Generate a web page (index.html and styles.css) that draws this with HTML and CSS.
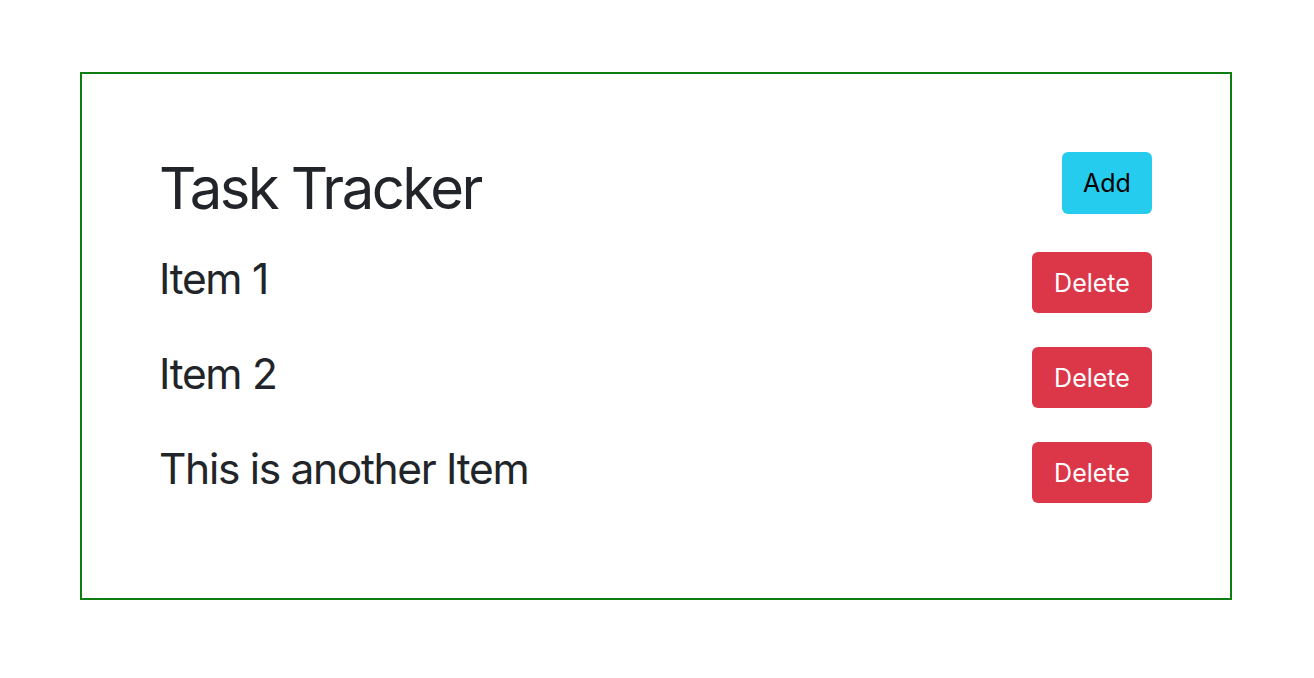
FILE: index.html
```html
<!DOCTYPE html>
<html>
<head>
<meta charset="utf-8">
<link rel="stylesheet" href="styles.css">
</head>
<body>
<div class="card">
  <header class="header">
    <h1 class="title">Task Tracker</h1>
    <button class="btn btn-add">Add</button>
  </header>
  <ul class="list">
    <li class="row"><span class="item">Item 1</span><button class="btn btn-delete">Delete</button></li>
    <li class="row"><span class="item">Item 2</span><button class="btn btn-delete">Delete</button></li>
    <li class="row"><span class="item">This is another Item</span><button class="btn btn-delete">Delete</button></li>
  </ul>
</div>
</body>
</html>
```
FILE: styles.css
```css
html, body {
  margin: 0;
  padding: 0;
  background: #fff;
}
body {
  font-family: Inter, "Noto Sans", sans-serif;
  color: #212529;
}
.card {
  margin: 72px 0 0 80px;
  width: 1152px;
  box-sizing: border-box;
  border: 2px solid #0f7d0f;
  padding: 78px 78px 95px 77px;
}
.header {
  display: flex;
  justify-content: space-between;
  align-items: center;
  height: 62px;
}
.title {
  margin: 0;
  padding-top: 12px;
  font-size: 58px;
  font-weight: 400;
  line-height: 1.2;
  letter-spacing: -0.044em;
}
.list {
  list-style: none;
  margin: 38px 0 0;
  padding: 0;
  display: flex;
  flex-direction: column;
  gap: 34px;
}
.row {
  display: flex;
  justify-content: space-between;
  align-items: center;
  height: 61px;
}
.item {
  font-size: 42.5px;
  line-height: 1.2;
  letter-spacing: -0.031em;
  padding-bottom: 8px;
}
.btn {
  font-family: Inter, "Noto Sans", sans-serif;
  font-size: 25px;
  border: none;
  border-radius: 6px;
  padding: 0;
  cursor: pointer;
}
.btn-add {
  background: #26cced;
  color: #000;
  width: 90px;
  height: 62px;
}
.btn-delete {
  background: #dc3749;
  color: #fff;
  width: 120px;
  height: 61px;
}
```
